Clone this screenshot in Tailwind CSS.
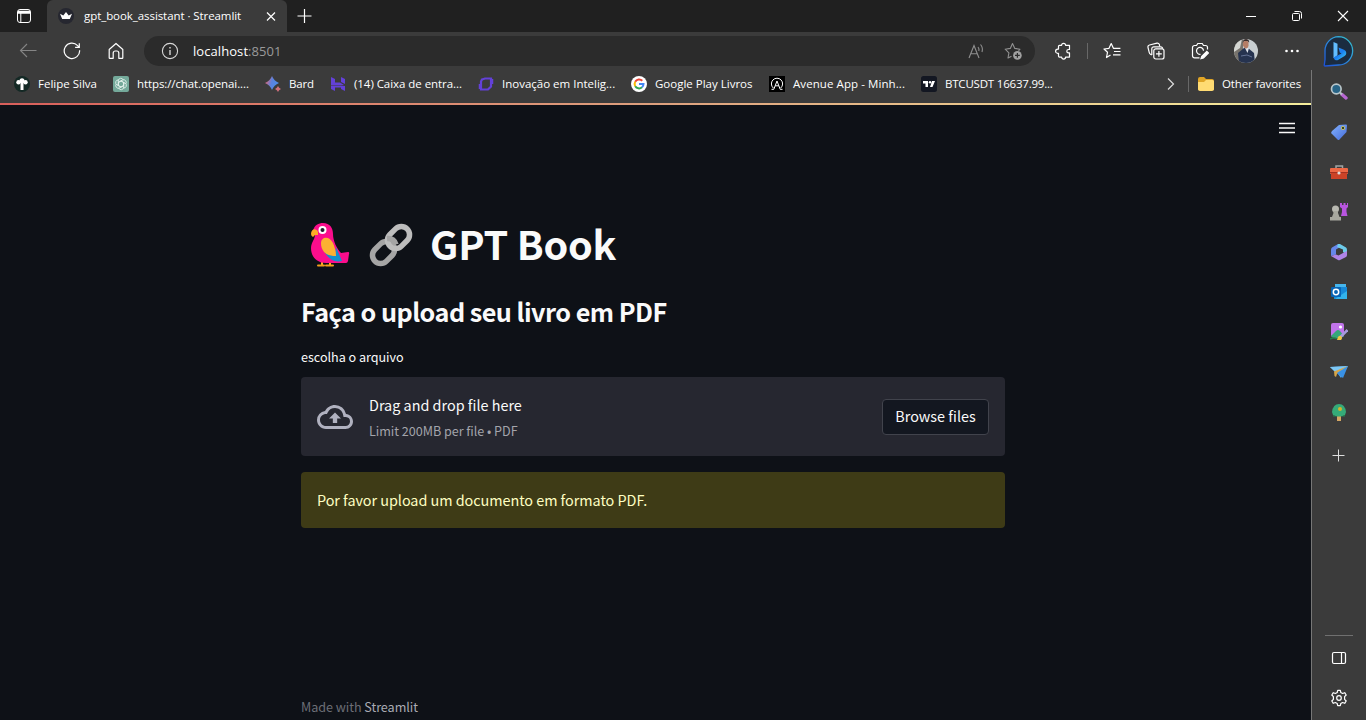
<!DOCTYPE html>
<html lang="pt-BR">
<head>
<meta charset="utf-8">
<title>gpt_book_assistant · Streamlit</title>
<script src="https://cdn.jsdelivr.net/npm/@tailwindcss/browser@4"></script>
</head>
<body class="w-[1366px] h-[720px] overflow-hidden flex flex-col bg-[#3b3b3b] text-white font-['Open_Sans',sans-serif] text-[11.5px]">

<!-- Tab strip -->
<header class="h-8 shrink-0 flex items-stretch bg-[#202020]">
  <div class="w-[47px] flex items-center justify-center">
    <svg class="size-4" viewBox="0 0 16 16" fill="none" stroke="#fff"><rect x="1.5" y="1.5" width="13" height="13" rx="2.5"/><path d="M2 3.5h12M2 5h12" stroke-width="1.5"/><path d="M4.8 5v9"/></svg>
  </div>
  <div class="w-60 flex items-center bg-[#3b3b3b] rounded-t-md pl-[11px]">
    <svg class="size-4 shrink-0" viewBox="0 0 16 16"><circle cx="8" cy="8" r="8" fill="#262730"/><path d="M2 5.8l3.3 1.7L8 4l2.7 3.5L14 5.8l-2.2 5.2H4.2z" fill="#fff"/></svg>
    <span class="ml-[10px] w-[179px] whitespace-nowrap tracking-[-0.07px]">gpt_book_assistant · Streamlit</span>
    <svg class="size-4 shrink-0" viewBox="0 0 16 16" fill="none" stroke="#fff" stroke-width="1.2"><path d="M4 4.500l8 8M12 4.500l-8 8"/></svg>
  </div>
  <div class="w-[35px] flex items-center justify-center">
    <svg class="size-4" viewBox="0 0 16 16" fill="none" stroke="#fff" stroke-width="1.2"><path d="M7.500 1v14M.500 8h14"/></svg>
  </div>
  <div class="ml-auto flex">
    <div class="w-[46px] flex items-center justify-center"><svg class="size-3" viewBox="0 0 12 12" stroke="#fff"><path d="M1 6.500h10"/></svg></div>
    <div class="w-[46px] flex items-center justify-center"><svg class="size-3" viewBox="0 0 12 12" fill="none" stroke="#fff"><rect x="1.500" y="3.500" width="7" height="7" rx="1"/><path d="M3.500 1.500h5a2 2 0 0 1 2 2v5"/></svg></div>
    <div class="w-[46px] flex items-center justify-center"><svg class="size-3" viewBox="0 0 12 12" stroke="#fff" stroke-width="1.1"><path d="M1 1l10 10M11 1L1 11"/></svg></div>
  </div>
</header>

<!-- Address bar -->
<div class="h-[38px] shrink-0 flex items-center pl-[6px]">
  <div class="w-11 flex justify-center"><svg class="size-[18px]" viewBox="0 0 18 18" fill="none" stroke="#858585" stroke-width="1.1"><path d="M17.500 8.500H1.500M8 2L1.500 8.500 8 15"/></svg></div>
  <div class="w-11 flex justify-center"><svg class="size-[18px]" viewBox="0 0 18 18" fill="none" stroke="#fff" stroke-width="1.200"><path d="M16.600 8.200a7.700 7.700 0 1 1-2-4.600l1.700 1.700M16.300 1.200v4.200h-4.200"/></svg></div>
  <div class="w-11 flex justify-center"><svg class="size-[18px]" viewBox="0 0 18 18" fill="none" stroke="#fff" stroke-width="1.200" stroke-linejoin="round"><path d="M2.200 7.500L9 1.500l6.800 6v8.200a.6.6 0 0 1-.6.6h-3.400V11a2 2 0 0 0-2-2H8.200a2 2 0 0 0-2 2v5.300H2.800a.6.6 0 0 1-.6-.6z"/></svg></div>
  <div class="ml-[6px] w-[891px] h-[30px] rounded-full bg-[#2b2b2b] flex items-center pl-[17px]">
    <svg class="size-[18px]" viewBox="0 0 18 18" fill="none" stroke="#d8d8d8" stroke-width="1.100"><circle cx="9" cy="9" r="7.600"/><path d="M9 8v5M9 5v1.500" stroke-width="1.400"/></svg>
    <span class="ml-[14px] pt-px text-[13px] tracking-[0.07px] whitespace-nowrap">localhost<span class="text-[#9a9a9a]">:8501</span></span>
    <div class="ml-auto flex items-center gap-[19px] pr-[13px]">
      <svg class="size-[17px]" viewBox="0 0 17 17" fill="none" stroke="#909090" stroke-width="1.100"><path d="M1 15L6 2.500 11 15M2.800 10.800h6.400M10 4q1.500 1.800.8 4M12.500 1.500q2.800 3.200 1.500 7.500"/></svg>
      <svg class="size-[18px]" viewBox="0 0 18 18" fill="none" stroke="#909090" stroke-width="1.100" stroke-linejoin="round"><path d="M7.500 14.200L4 16l.9-5.200L1.200 7.200l5.100-.8L8.500 1.500l2.300 4.900 5.200.8-1.500 1.600"/><circle cx="13.400" cy="13.400" r="4.300" fill="#a0a0a0" stroke="none"/><path d="M13.400 11v4.800M11 13.400h4.800" stroke="#2b2b2b" stroke-width="1.200"/></svg>
    </div>
  </div>
  <div class="ml-[6px] w-11 flex justify-center"><svg class="size-[18px]" viewBox="0 0 18 18" fill="none" stroke="#fff" stroke-width="1.200" stroke-linejoin="round"><path d="M5.500 3.300h2.100a2 2 0 0 1 4 0h3.900v4.200h-1a1.700 1.700 0 0 0 0 3.400h1v4.200h-3.900a2 2 0 0 1-4 0H5.500a1 1 0 0 1-1-1v-2.800h-.8a2.100 2.100 0 0 1 0-4.200h.8V4.300a1 1 0 0 1 1-1z"/></svg></div>
  <div class="w-[5px] flex justify-center"><div class="w-px h-4 bg-[#686868]"></div></div>
  <div class="w-11 flex justify-center"><svg class="size-[18px]" viewBox="0 0 18 18" fill="none" stroke="#fff" stroke-width="1.200" stroke-linejoin="round"><path d="M7.500 13L3.500 15.500l1-5.200L1 7l5-.7L8.200 1.500l2.200 4.800h7M11 9.500h6.500M10 12.800h7.500"/></svg></div>
  <div class="w-11 flex justify-center"><svg class="size-[18px]" viewBox="0 0 18 18" fill="none" stroke="#fff" stroke-width="1.200"><path d="M4.800 13L3.500 12.300a3 3 0 0 1-1.300-2L1 5.500a2 2 0 0 1 1.500-2.500l7.500-1.800a2 2 0 0 1 2.400 1.500l.3 1.800"/><path d="M4.800 13V6.800a2 2 0 0 1 2-2h6.800a2 2 0 0 1 2 2"/><rect x="6.800" y="6.800" width="10.200" height="10.200" rx="2"/><path d="M11.900 9v5.800M9 11.900h5.800"/></svg></div>
  <div class="w-11 flex justify-center"><svg class="size-[18px]" viewBox="0 0 18 18" fill="none" stroke="#fff" stroke-width="1.200"><path d="M8.500 15.800H3.500a2 2 0 0 1-2-2V5.500a2 2 0 0 1 2-2h2L6.800 1.500h4.400l1.300 2h2a2 2 0 0 1 2 2v2"/><path d="M9.500 12.300a3.500 3.500 0 1 1 3-3.600"/><path d="M15.800 9.300l-5 5-.8 2.400 2.500-.7 5-5z" fill="#fff"/></svg></div>
  <div class="w-12 flex justify-center"><svg class="size-6 rounded-full" viewBox="0 0 24 24"><rect width="24" height="24" fill="#c9cfd1"/><path d="M0 0h9v24H0z" fill="#77736c"/><path d="M0 0h8L6 9 0 13z" fill="#d5d7d3"/><path d="M4 14l6-5h4l6 5 1 10H5z" fill="#26334f"/><path d="M11 9h4l-1.500 5z" fill="#dfe4ea"/><path d="M9 3q3-3 5.500 0v3.500q-.5 3-2.500 3t-3-3z" fill="#b57d65"/><path d="M8.700 4q0-4 3.300-4t3.200 3.500L13.500 2H10z" fill="#3a2b28"/><path d="M7 17l6-1 5 2" stroke="#657395" fill="none"/></svg></div>
  <div class="w-11 flex justify-center"><svg class="w-4 h-1" viewBox="0 0 16 4" fill="#fff"><circle cx="2.500" cy="2" r="1.300"/><circle cx="8" cy="2" r="1.300"/><circle cx="13.500" cy="2" r="1.300"/></svg></div>
  <div class="w-[48px] flex justify-center"><svg class="size-8" viewBox="0 0 32 32"><defs><linearGradient id="bg" x1="0" y1="1" x2="1" y2="0"><stop offset="0" stop-color="#1c50d8"/><stop offset=".5" stop-color="#2b8be0"/><stop offset="1" stop-color="#38c5c8"/></linearGradient><linearGradient id="bb" x1="0" y1="0" x2="1" y2="1"><stop offset="0" stop-color="#2f8ff5"/><stop offset=".5" stop-color="#1a7df0"/><stop offset="1" stop-color="#42d5ee"/></linearGradient></defs><path d="M16.500 1.700a14 14 0 1 1 0 28.300L3 31q-1 0-.7-1l.7-5.500v-9A14 14 0 0 1 16.500 1.700z" fill="#1b2c40" stroke="url(#bg)" stroke-width="1.300"/><path d="M11.500 7l4 1.700v11.500l-4 3z" fill="#62bdff"/><path d="M16.500 12.500l5.500 2.300q2.300 1 2.300 3.200 0 2-1.700 3L16 25q-3.500 1-4.500-2.500l4-2 4-2-1.700-1z" fill="url(#bb)"/></svg></div>
</div>

<div class="flex-1 min-h-0 flex">
  <div class="w-[1311px] flex flex-col">
    <!-- Favorites bar -->
    <nav class="h-[33px] shrink-0 flex items-center pl-[14px] pb-[5px] whitespace-nowrap">
      <div class="w-[99px] flex items-center gap-2"><svg class="size-4" viewBox="0 0 16 16"><circle cx="8" cy="8" r="8" fill="#142925"/><g fill="#fff"><circle cx="8" cy="4.800" r="2.500"/><circle cx="4.500" cy="6.200" r="2.200"/><circle cx="11.500" cy="6.200" r="2.200"/><path d="M6.500 6h3v8h-3z"/></g></svg><span>Felipe Silva</span></div>
      <div class="w-[152px] flex items-center gap-2"><svg class="size-4" viewBox="0 0 16 16"><rect width="16" height="16" rx="2" fill="#74a99a"/><g fill="none" stroke="#e8f4ef" stroke-width=".8"><path id="kn" d="M5.300 5.300V4.800a2.600 2.600 0 0 1 5-.9M5.300 4.800v4.700L8 11"/><use href="#kn" transform="rotate(60 8 8)"/><use href="#kn" transform="rotate(120 8 8)"/><use href="#kn" transform="rotate(180 8 8)"/><use href="#kn" transform="rotate(240 8 8)"/><use href="#kn" transform="rotate(300 8 8)"/></g></svg><span class="tracking-[-0.1px]">https://chat.openai....</span></div>
      <div class="w-[65px] flex items-center gap-2"><svg class="size-4" viewBox="0 0 16 16"><defs><linearGradient id="bd" x1="0" x2="1" y2=".3"><stop offset=".15" stop-color="#d9687a"/><stop offset=".55" stop-color="#5b82df"/><stop offset="1" stop-color="#4e8ce8"/></linearGradient></defs><path d="M7 0q2 5 7 7-5 2-7 7-2-5-7-7 5-2 7-7z" fill="url(#bd)"/><path d="M13 10q.8 2.200 3 3-2.200.8-3 3-.8-2.200-3-3 2.200-.8 3-3z" fill="#d0707c"/></svg><span class="tracking-[-0.2px]">Bard</span></div>
      <div class="w-[148px] flex items-center gap-2"><svg class="size-4" viewBox="0 0 16 16" fill="#6341d8"><path d="M1 1l4 2v3.500h5L14 9H1zM11 1l4 2v5l-4-2zM1 9.500h10l4 .5v5l-4-2v-1.500H5V15l-4-2z"/></svg><span class="tracking-[-0.05px]">(14) Caixa de entra...</span></div>
      <div class="w-[153px] flex items-center gap-2"><svg class="size-4" viewBox="0 0 16 16" fill="none" stroke="#6341d8"><path d="M4 3.500l3-1H13v8L10 13.500H3V5.500z" stroke-width="2.200"/><path d="M1.500 8v5M14.500 3v5" stroke-width="1.500"/></svg><span>Inovação em Intelig...</span></div>
      <div class="w-[138px] flex items-center gap-2"><svg class="size-4" viewBox="0 0 16 16" fill="none" stroke-width="2"><circle cx="8" cy="8" r="8" fill="#fff"/><path d="M4.200 5.800A4.500 4.500 0 0 1 11.300 4.800" stroke="#ea4335"/><path d="M4.200 10.200a4.500 4.500 0 0 1 0-4.400" stroke="#fbbc05"/><path d="M11 11.300a4.500 4.500 0 0 1-6.800-1.100" stroke="#34a853"/><path d="M8 8h4.500a4.500 4.500 0 0 1-1.500 3.300" stroke="#4285f4"/></svg><span>Google Play Livros</span></div>
      <div class="w-[152px] flex items-center gap-2"><svg class="size-4" viewBox="0 0 16 16" fill="none" stroke="#fff"><path d="M0 0h16v16H0z" fill="#000" stroke="none"/><path d="M4.300 12a5.600 5.600 0 1 1 7.400 0"/><path d="M2.500 13.300h2.300L8 5l3.200 8.300h2.300M6.200 9.800h3.600"/></svg><span class="tracking-[0.08px]">Avenue App - Minh...</span></div>
      <div class="flex items-center gap-2"><svg class="size-4" viewBox="0 0 16 16"><rect width="16" height="16" rx="2.500" fill="#131722"/><path d="M2 5h5v6H4.500V7.500H2zM11 5h3l-2.500 6H9z" fill="#fff"/><circle cx="9" cy="6.200" r="1.200" fill="#fff"/></svg><span class="tracking-[-0.2px]">BTCUSDT 16637.99...</span></div>
      <div class="ml-auto pr-[10px] flex items-center">
        <svg class="w-2 h-3 mr-[13px]" viewBox="0 0 8 12" fill="none" stroke="#ddd" stroke-width="1.200"><path d="M1 .5L6.500 6 1 11.500"/></svg>
        <div class="w-px h-4 bg-[#686868] mr-[9px]"></div>
        <svg class="size-4 mr-2" viewBox="0 0 16 16"><path d="M0 3a2 2 0 0 1 2-2h4l2 2h6a2 2 0 0 1 2 2v9H0z" fill="#e0a526"/><path d="M0 6h6l2-2h6.500A1.500 1.500 0 0 1 16 5.500V13a2 2 0 0 1-2 2H2a2 2 0 0 1-2-2z" fill="#ffdb73"/></svg>
        <span class="tracking-[-0.12px]">Other favorites</span>
      </div>
    </nav>

    <!-- Streamlit app -->
    <main class="flex-1 min-h-0 flex flex-col bg-[#0e1117] text-[#fafafa] font-['Noto_Sans_CJK_JP',sans-serif]">
      <div class="h-[2px] shrink-0 bg-linear-to-r from-[#d95f5b] via-[#dda07e] to-[#f5ee9c]"></div>
      <div class="h-[46px] shrink-0 flex justify-end items-center pr-4">
        <svg class="size-4" viewBox="0 0 16 16" stroke="#fafafa" stroke-width="1.700"><path d="M0 3.500h16M0 8h16M0 12.500h16"/></svg>
      </div>
      <div class="ml-[301px] w-[704px] flex-1 flex flex-col">
        <h1 class="mt-[64px] h-[60px] flex items-center whitespace-nowrap text-[39.600px] font-bold">
          <svg class="w-[39px] h-11 ml-[10px]" viewBox="0 0 39 44"><path d="M11 37v5M19 37v5" stroke="#fcb11e" stroke-width="2"/><path d="M7 42.500h6M15 42.500h7" stroke="#f29f1c" stroke-width="2" stroke-linecap="round"/><path d="M2 8C3 2 8 0 12 0c7 0 10 5 10 11 0 7 4 15 8 19l7-1c1 0 1.500 1 1 2l-1 7q-.5 2-2 2H15C6 40 0 34 0 25c0-6 4-8 4-14z" fill="#fb0d8c"/><path d="M11 24q3 7 13 9l1-9 6 14q-13 3-20-14z" fill="#138fce"/><path d="M10 20c0-6 8-8 12 0 1.500 3.500 3 8 3 13-5 0-9-1-12-4-2-2.500-3-5-3-9z" fill="#fcb132"/><path d="M0 11c0-6 6-6 7-2v3H4l-2 2q-2-1-2-3z" fill="#fcaa26"/><circle cx="11.500" cy="7" r="4" fill="#fff"/><circle cx="11.500" cy="7" r="2" fill="#241a2b"/></svg>
          <svg class="size-11 ml-[19px]" viewBox="0 0 44 44" fill="none" stroke-width="5.500"><rect x="-12.200" y="-8.200" width="24.400" height="16.400" rx="8.200" transform="translate(14.500 29.500) rotate(-45)" stroke="#a5a5a5"/><rect x="-12.200" y="-8.200" width="24.400" height="16.400" rx="8.200" transform="translate(29.500 14.500) rotate(-45)" stroke="#bdbdbd"/><path d="M18 15.500q7-.5 9 6" stroke="#a5a5a5"/></svg>
          <span class="ml-[17px] -mt-1 tracking-[-0.25px]">GPT Book</span>
        </h1>
        <h3 class="mt-[15px] h-[44px] flex items-center whitespace-nowrap text-[25.200px] font-semibold tracking-[-0.52px]">Faça o upload seu livro em PDF</h3>
        <label class="mt-[13px] h-5 leading-5 text-[12.600px] tracking-[-0.03px] whitespace-nowrap">escolha o arquivo</label>
        <section class="mt-[10px] h-[79px] shrink-0 rounded bg-[#262730] flex items-center px-4">
          <svg class="size-9" viewBox="0 0 24 24" fill="#b0b1bf"><path d="M19.350 10.040A7.490 7.490 0 0 0 12 4C9.110 4 6.600 5.640 5.350 8.040A5.994 5.994 0 0 0 0 14c0 3.310 2.690 6 6 6h13c2.760 0 5-2.240 5-5 0-2.640-2.050-4.780-4.650-4.960zM19 18H6c-2.210 0-4-1.790-4-4 0-2.050 1.530-3.760 3.560-3.970l1.070-.11.500-.95A5.469 5.469 0 0 1 12 6c2.620 0 4.880 1.860 5.390 4.430l.300 1.500 1.530.110A2.980 2.980 0 0 1 22 15c0 1.650-1.350 3-3 3zM8 13h2.550v3h2.900v-3H16l-4-4z"/></svg>
          <div class="ml-4 flex flex-col whitespace-nowrap">
            <div class="h-[26px] leading-[27px] text-[14.400px]">Drag and drop file here</div>
            <div class="h-[25px] leading-[28px] text-[12.600px] tracking-[-0.03px] text-[#a3a4ab]">Limit 200MB per file • PDF</div>
          </div>
          <button class="ml-auto w-[107px] h-9 pb-[2px] rounded border border-[#41434c] bg-[#131720] text-[14.400px] whitespace-nowrap flex items-center justify-center">Browse files</button>
        </section>
        <div class="mt-4 h-14 shrink-0 rounded bg-[#3e3b16] text-[#ffffc2] text-[14.400px] tracking-[-0.04px] px-4 flex items-center whitespace-nowrap">Por favor upload um documento em formato PDF.</div>
        <footer class="mt-auto h-[26px] leading-[26px] text-[12.600px] tracking-[-0.04px] text-[#6c6e76] whitespace-nowrap">Made with <span class="text-[#a9abb3]">Streamlit</span></footer>
      </div>
    </main>
  </div>

  <!-- Edge sidebar -->
  <aside class="w-[55px] border-l border-[#777] flex flex-col items-center pt-[2px]">
    <div class="h-10 flex items-center"><svg class="size-[18px]" viewBox="0 0 18 18"><path d="M12 11.500l4 3.500" stroke="#b866d2" stroke-width="3.400" stroke-linecap="round"/><path d="M10 9.500l2 2" stroke="#b8c5c9" stroke-width="2"/><circle cx="6.300" cy="6" r="4.800" fill="#286486" stroke="#b8c5c9" stroke-width="1.700"/></svg></div>
    <div class="h-10 flex items-center"><svg class="size-[18px]" viewBox="0 0 18 18"><defs><linearGradient id="tg" x2="1" y2="1"><stop stop-color="#84b3ff"/><stop offset="1" stop-color="#456cd9"/></linearGradient></defs><path d="M2 8l7-6 7-.5q1 0 1 1L16.500 9l-7 7.500q-1 1-2 0l-6-6q-1-1 .5-2.500z" fill="url(#tg)"/><circle cx="13" cy="5" r="1.700" fill="#35412e" stroke="#c0bd68"/></svg></div>
    <div class="h-10 flex items-center"><svg class="size-[18px]" viewBox="0 0 18 18"><path d="M6 5.500V3h6.500v2.500" fill="none" stroke="#a0a5a5" stroke-width="1.500"/><rect y="5" width="18" height="6" rx="1" fill="#ed6845"/><path d="M1 10h16v6H1z" fill="#cc4327"/><path d="M0 9.500h18" stroke="#a43120"/><circle cx="9" cy="10" r="1.600" fill="#ddd"/></svg></div>
    <div class="h-10 flex items-center"><svg class="size-[18px]" viewBox="0 0 18 18"><path d="M10 2V0h2v2h1.500V0h2v2H17V0h1v4l-1.500 1.500V9l1 4H11l1-4V5.500L10 4z" fill="#b855df"/><circle cx="5.500" cy="6" r="3.500" fill="#b8b8b0"/><path d="M3 8h5v2l1.500 4H11v3.500H0V14h2l1.500-4z" fill="#a8a89f"/></svg></div>
    <div class="h-10 flex items-center"><svg class="size-[18px]" viewBox="0 0 18 18"><path d="M8 1L2 4.500Q1 5 1 7v6l5-1.500V6.500l5-3z" fill="#6687eb"/><path d="M8 1h2l6 3.500Q17 5 17 7v5l-4-3V6.500L7 4z" fill="#6dcbea"/><path d="M17 8v4q0 1.500-1 2l-6 3q-1 .5-2 0l-7-4 5-1.500 2.500 1L13 10z" fill="#af84e7"/></svg></div>
    <div class="h-10 flex items-center"><svg class="size-[18px]" viewBox="0 0 18 18"><path d="M5 1h11v7H5z" fill="#45b5ed"/><path d="M10 4h7v12H4v-5z" fill="#1789d8"/><path d="M17 8v8H5z" fill="#32b3ec"/><rect x="1" y="4" width="10" height="10" rx="1" fill="#0864b5"/><circle cx="6" cy="9" r="2.700" fill="none" stroke="#fff" stroke-width="1.500"/></svg></div>
    <div class="h-10 flex items-center"><svg class="size-[18px]" viewBox="0 0 18 18"><rect x="1" y="0" width="13" height="14" rx="2" fill="#c174eb"/><path d="M1 13l5-5q2-2 4 0l4 5-3 2H3z" fill="#35a879"/><circle cx="10.500" cy="4" r="1.600" fill="#fff"/><path d="M17.500 7l-7 7" stroke="#a599dc" stroke-width="2.500"/><path d="M7 17q1-5 4-4 2 2 0 4z" fill="#efc644"/><path d="M0 16q4-2 7 0" stroke="#267c49" fill="none" stroke-width="1.500"/></svg></div>
    <div class="h-10 flex items-center"><svg class="size-[18px]" viewBox="0 0 18 18"><path d="M0 4l18-1-7 12-3-4z" fill="#4ca4ef"/><path d="M0 4l18-1L5 9z" fill="#7cc7f4"/><path d="M18 3l-5 12-6-5z" fill="#3991e5"/><path d="M4 8.500L18 3 7.500 9.500 6 14l-1.500-1z" fill="#d7a548"/></svg></div>
    <div class="h-10 flex items-center pt-px"><svg class="size-[18px]" viewBox="0 0 18 18"><path d="M7 11h4v6H7z" fill="#d5a764"/><path d="M2 8q1-8 7-8t7 8l-1 3q-6 3-12 0z" fill="#35aa78"/><circle cx="10" cy="5" r="2" fill="#d4b32b"/><path d="M3 11q6 3 12 0v1.500H3z" fill="#247f50"/></svg></div>
    <div class="h-[46px] flex items-center"><svg class="size-[14px]" viewBox="0 0 14 14" stroke="#ddd"><path d="M6.500 1.500v12M.500 7.500h12"/></svg></div>
    <div class="mt-auto w-7 h-px bg-[#707070]"></div>
    <div class="h-[44px] flex items-center"><svg class="size-4" viewBox="0 0 16 16" fill="none" stroke="#fff" stroke-width="1.200"><rect x="1.500" y="2.500" width="13" height="11" rx="1.500"/><path d="M10.500 2.500v11"/></svg></div>
    <div class="h-10 flex items-center pb-1"><svg class="size-[18px]" viewBox="0 0 18 18" fill="none" stroke="#fff" stroke-width="1.200" stroke-linejoin="round"><path d="M7.200 3.500L7.700 1.300h2.600l.5 2.200 1.800 1 2.100-.8 1.500 2.300-1.600 1.700v2.600l1.600 1.700-1.500 2.300-2.100-.8-1.800 1-.5 2.200H7.700l-.5-2.200-1.800-1-2.100.8L1.800 12l1.600-1.700V7.700L1.800 6l1.500-2.300 2.100.8z"/><circle cx="9" cy="9" r="2.300"/></svg></div>
  </aside>
</div>
</body>
</html>
